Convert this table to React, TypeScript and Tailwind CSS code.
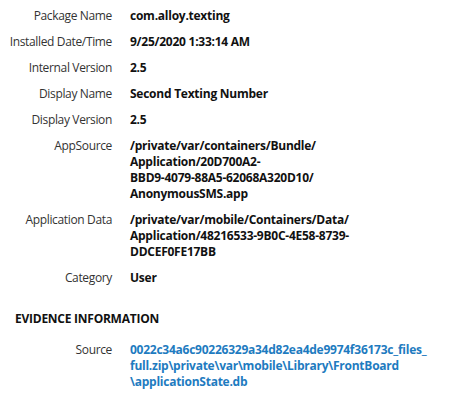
export default function App() {
  const rows: { label: string; lines: string[] }[] = [
    { label: "Package Name", lines: ["com.alloy.texting"] },
    { label: "Installed Date/Time", lines: ["9/25/2020 1:33:14 AM"] },
    { label: "Internal Version", lines: ["2.5"] },
    { label: "Display Name", lines: ["Second Texting Number"] },
    { label: "Display Version", lines: ["2.5"] },
    {
      label: "AppSource",
      lines: [
        "/private/var/containers/Bundle/",
        "Application/20D700A2-",
        "BBD9-4079-88A5-62068A320D10/",
        "AnonymousSMS.app",
      ],
    },
    {
      label: "Application Data",
      lines: [
        "/private/var/mobile/Containers/Data/",
        "Application/48216533-9B0C-4E58-8739-",
        "DDCEF0FE17BB",
      ],
    },
    { label: "Category", lines: ["User"] },
  ];
  const font = { fontFamily: '"Segoe UI", "Open Sans", "Noto Sans", sans-serif' };
  return (
    <div className="w-[449px] h-[396px] bg-white text-[12px] leading-[16px] pt-[3px]" style={font}>
      {rows.map((r) => (
        <div key={r.label} className="flex py-[5px]">
          <div className="w-[112px] shrink-0 text-right text-[#333333] whitespace-nowrap tracking-[-0.35px]">{r.label}</div>
          <div className="pl-[18px] font-bold text-[#111111] whitespace-nowrap tracking-[-0.25px]">
            {r.lines.map((l) => (
              <div key={l}>{l}</div>
            ))}
          </div>
        </div>
      ))}
      <div className="pt-[20px] pb-[10px] pl-[15px] font-bold text-[#111111] tracking-[-0.25px]">EVIDENCE INFORMATION</div>
      <div className="flex py-[5px]">
        <div className="w-[112px] shrink-0 text-right text-[#333333] tracking-[-0.35px]">Source</div>
        <div className="pl-[18px] font-bold text-[#1e7bc0] whitespace-nowrap tracking-[-0.25px]">
          <div>0022c34a6c90226329a34d82ea4de9974f36173c_files_</div>
          <div>full.zip\private\var\mobile\Library\FrontBoard</div>
          <div>\applicationState.db</div>
        </div>
      </div>
    </div>
  );
}
